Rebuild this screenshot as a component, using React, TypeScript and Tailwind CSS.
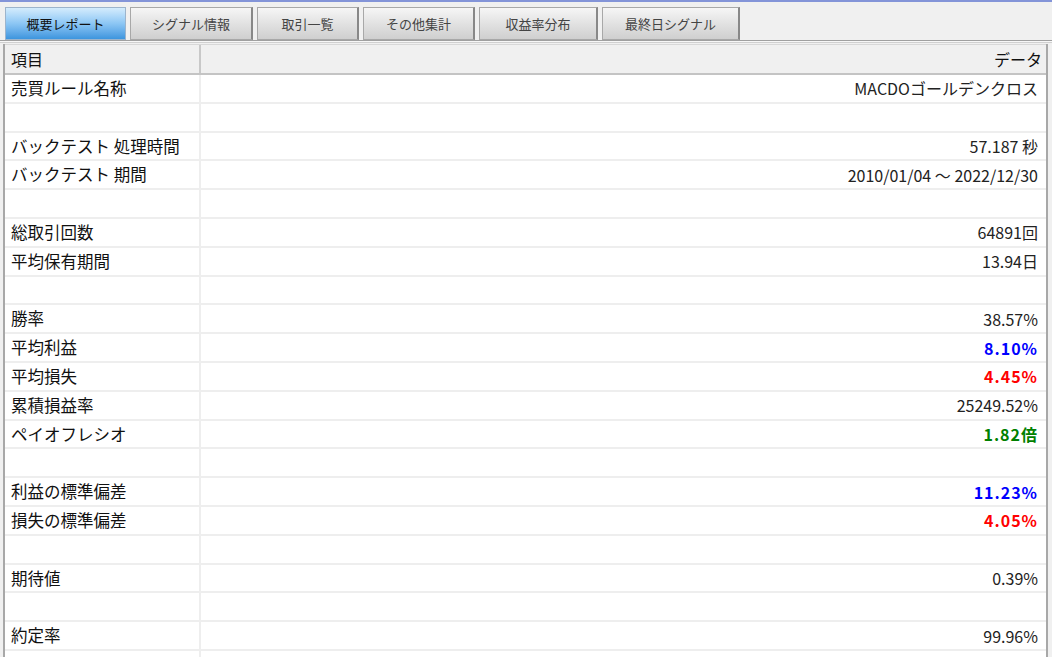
import React from 'react'

type Row = { label?: string; value?: string; tone?: 'blue' | 'red' | 'green' }

const tabs = [
  { label: '概要レポート', w: 'w-[121px]', active: true },
  { label: 'シグナル情報', w: 'w-[123px]' },
  { label: '取引一覧', w: 'w-[102px]' },
  { label: 'その他集計', w: 'w-[112px]' },
  { label: '収益率分布', w: 'w-[119px]' },
  { label: '最終日シグナル', w: 'w-[138px]' },
]

const rows: Row[] = [
  { label: '売買ルール名称', value: 'MACDOゴールデンクロス' },
  {},
  { label: 'バックテスト 処理時間', value: '57.187 秒' },
  { label: 'バックテスト 期間', value: '2010/01/04 ～ 2022/12/30' },
  {},
  { label: '総取引回数', value: '64891回' },
  { label: '平均保有期間', value: '13.94日' },
  {},
  { label: '勝率', value: '38.57%' },
  { label: '平均利益', value: '8.10%', tone: 'blue' },
  { label: '平均損失', value: '4.45%', tone: 'red' },
  { label: '累積損益率', value: '25249.52%' },
  { label: 'ペイオフレシオ', value: '1.82倍', tone: 'green' },
  {},
  { label: '利益の標準偏差', value: '11.23%', tone: 'blue' },
  { label: '損失の標準偏差', value: '4.05%', tone: 'red' },
  {},
  { label: '期待値', value: '0.39%' },
  {},
  { label: '約定率', value: '99.96%' },
  {},
]

const toneClass = {
  blue: 'text-[#0000ff] font-bold tracking-[1px]',
  red: 'text-[#ff0000] font-bold tracking-[1px]',
  green: 'text-[#008000] font-bold tracking-[1px]',
}

export default function App() {
  return (
    <div
      className="w-[1052px] h-[657px] overflow-hidden bg-[#f0f0f0] border-t-2 border-[#8394d8] text-[#111]"
      style={{ fontFamily: '"Noto Sans CJK JP", "Liberation Sans", sans-serif' }}
    >
      {/* Tab strip */}
      <div className="flex items-end gap-[4px] pl-[5px] h-[38px]">
        {tabs.map((t) =>
          t.active ? (
            <div
              key={t.label}
              className={`${t.w} h-[33px] flex items-center justify-center text-[13px] border border-[#9cb4cc] bg-gradient-to-b from-[#d4ecfd] via-[#8cc6f4] to-[#3c95de]`}
            >
              {t.label}
            </div>
          ) : (
            <div
              key={t.label}
              className={`${t.w} h-[33px] flex items-center justify-center text-[13px] text-[#444] border border-[#a8a8a8] border-r-[#888] border-r-2 bg-gradient-to-b from-[#f6f6f6] via-[#e2e2e2] to-[#cfcfcf]`}
            >
              {t.label}
            </div>
          ),
        )}
      </div>
      <div className="h-[3px] border-t border-[#a0a0a0] border-b border-b-[#d0d0d0] bg-[#f7f7f7]" />

      {/* Report table */}
      <div className="ml-[3px] mr-[4px] mt-[1px] border-l-2 border-r-2 border-[#a8a8a8] bg-white">
        <div className="flex h-[31px] bg-[#f0f0f0] border-t border-[#d8d8d8] border-b-2 border-b-[#c4c4c4] text-[16px]">
          <div className="w-[196px] flex items-center pl-[6px] border-r-2 border-[#c8c8c8]">項目</div>
          <div className="flex-1 flex items-center justify-end pr-[4px]">データ</div>
        </div>
        {rows.map((r, i) => (
          <div key={i} className="flex h-[28.8px] border-b-2 border-[#eeeeee]">
            <div className="w-[196px] flex items-center pl-[6px] border-r-2 border-[#eeeeee] whitespace-nowrap text-[16.5px]">
              {r.label}
            </div>
            <div
              className={`flex-1 flex items-center justify-end pr-[8px] whitespace-nowrap text-[16px] ${
                r.tone ? toneClass[r.tone] : 'text-[#222]'
              }`}
            >
              {r.value}
            </div>
          </div>
        ))}
      </div>
    </div>
  )
}
